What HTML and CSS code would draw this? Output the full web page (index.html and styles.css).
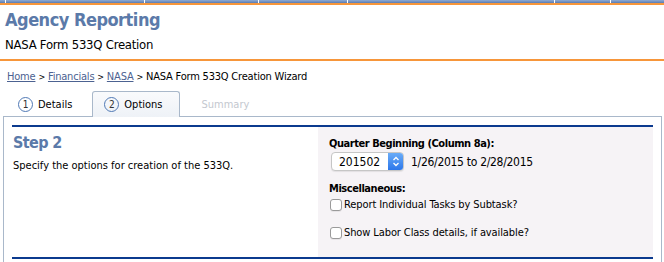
FILE: index.html
```html
<!DOCTYPE html>
<html lang="en">
<head>
    <meta charset="UTF-8">
    <title>Agency Reporting</title>
    <link rel="stylesheet" href="styles.css">
</head>
<body>
<div class="topnav">
    <span class="nav-item nav-start"></span>
    <span class="nav-item nav-projects"></span>
    <span class="nav-item nav-financials"></span>
    <span class="nav-item nav-people"></span>
    <span class="nav-item nav-reports"></span>
    <span class="nav-item nav-admin"></span>
    <span class="nav-item nav-rest"></span>
</div>

<header class="masthead">
    <h1>Agency Reporting</h1>
    <div class="subtitle">NASA Form 533Q Creation</div>
</header>

<div class="crumbs">
    <a href="#">Home</a> <span class="sep">&gt;</span>
    <a href="#">Financials</a> <span class="sep">&gt;</span>
    <a href="#">NASA</a> <span class="sep">&gt;</span>
    NASA Form 533Q Creation Wizard
</div>

<ul class="tabs">
    <li class="tab"><span class="num">1</span>Details</li>
    <li class="tab active"><span class="num">2</span>Options</li>
    <li class="tab disabled">Summary</li>
</ul>

<div class="panel">
    <div class="step">
        <div class="step-intro">
            <h2>Step 2</h2>
            <p>Specify the options for creation of the 533Q.</p>
        </div>
        <div class="step-options">
            <label class="field-label" for="quarter">Quarter Beginning (Column 8a):</label>
            <div class="quarter-row">
                <div class="select-box">
                    <select id="quarter">
                        <option>201502</option>
                    </select>
                    <span class="stepper">
                        <svg width="8" height="11" viewBox="0 0 8 11">
                            <path d="M1.5 4 L4 1.5 L6.5 4 M1.5 7 L4 9.5 L6.5 7" fill="none" stroke="#fff" stroke-width="1.3"/>
                        </svg>
                    </span>
                </div>
                <span class="range">1/26/2015 to 2/28/2015</span>
            </div>

            <div class="field-label misc">Miscellaneous:</div>
            <label class="check"><input type="checkbox">Report Individual Tasks by Subtask?</label>
            <label class="check"><input type="checkbox">Show Labor Class details, if available?</label>
        </div>
    </div>
</div>
</body>
</html>
```

FILE: styles.css
```css
body {
    margin: 0;
    font-family: "DejaVu Sans Condensed", "DejaVu Sans", sans-serif;
    font-stretch: condensed;
    font-size: 11px;
    color: #000;
    background: #fff;
}

/* nav bar, only its lower edge shows */
.topnav {
    display: flex;
    height: 3px;
    background: linear-gradient(#90abd3, #5b7db2);
    border-bottom: 2px solid #f7963a;
}

.nav-item {
    border-right: 1px solid #fff;
    height: 3px;
}

.nav-start { width: 5px; }
.nav-projects { width: 138px; }
.nav-financials { width: 113px; }
.nav-people { width: 88px; }
.nav-reports { width: 206px; }
.nav-admin { width: 55px; }
.nav-rest { flex: 1; border-right: none; }

.masthead {
    padding: 3px 5px 6px;
    border-bottom: 2px solid #f7963a;
}

.masthead h1 {
    margin: 0;
    font-size: 18px;
    line-height: 24px;
    letter-spacing: -0.5px;
    color: #5b7aa9;
}

.subtitle {
    margin-top: 5px;
    font-size: 13px;
    line-height: 16px;
    letter-spacing: -0.25px;
}

.crumbs {
    margin: 9px 7px 0;
    line-height: 14px;
    letter-spacing: -0.2px;
}

.crumbs a {
    color: #4c6291;
}

.crumbs .sep {
    font-size: 9px;
}

.tabs {
    display: flex;
    list-style: none;
    margin: 7px 0 0 14px;
    padding: 0;
    position: relative;
    z-index: 1;
}

.tab {
    display: flex;
    align-items: center;
    gap: 5px;
    padding: 5px 12px 4px 3px;
    line-height: 15px;
    border: 1px solid transparent;
    border-bottom: none;
    border-radius: 3px 3px 0 0;
}

.tab.active {
    margin-left: 7px;
    padding-left: 11px;
    padding-right: 16px;
    border-color: #a9b8ca;
    background: linear-gradient(#f9fafc, #eef2f7);
    margin-bottom: -1px;
    padding-bottom: 5px;
}

.tab.disabled {
    color: #c4c8cf;
    padding-left: 21px;
}

.num {
    width: 13px;
    height: 13px;
    border: 1px solid #5079b5;
    border-radius: 50%;
    display: flex;
    align-items: center;
    justify-content: center;
    font-size: 10px;
    color: #333;
}

.panel {
    margin: 0 2px 0 3px;
    padding: 8px 8px 0;
    border: 1px solid #a9b8ca;
    min-height: 160px;
}

.step {
    display: flex;
    border-top: 2px solid #0b3a8e;
    border-bottom: 2px solid #0b3a8e;
}

.step-intro {
    width: 305px;
    padding: 6px 0 0 1px;
}

.step-intro h2 {
    margin: 0;
    font-size: 16px;
    line-height: 20px;
    letter-spacing: -0.6px;
    color: #5b7aa9;
}

.step-intro p {
    margin: 6px 0 0;
    line-height: 14px;
}

.step-options {
    flex: 1;
    background: #f6f3f6;
    padding: 10px 0 17px 11px;
}

.field-label {
    display: block;
    font-weight: bold;
    line-height: 14px;
    letter-spacing: -0.45px;
}

.field-label.misc {
    margin-top: 11px;
}

.quarter-row {
    display: flex;
    align-items: center;
    gap: 7px;
    margin: 1px 0 0 2px;
}

.select-box {
    display: flex;
    width: 71px;
    height: 17px;
    border: 1px solid #c6c6c6;
    border-radius: 4px;
    background: #fff;
    box-shadow: 0 1px 1px rgba(0, 0, 0, 0.08);
    overflow: hidden;
}

.select-box select {
    flex: 1;
    appearance: none;
    border: none;
    background: transparent;
    font: inherit;
    font-size: 12px;
    padding: 0 0 0 7px;
    margin: 0;
    outline: none;
}

.stepper {
    width: 15px;
    display: flex;
    align-items: center;
    justify-content: center;
    background: linear-gradient(#6aacf8, #2d77ea);
}

.range {
    font-size: 12px;
    letter-spacing: -0.3px;
}

.check {
    display: flex;
    align-items: center;
    gap: 2px;
    line-height: 14px;
    margin-top: 2px;
    letter-spacing: -0.1px;
}

.check + .check {
    margin-top: 14px;
}

.check input {
    appearance: none;
    width: 12px;
    height: 12px;
    margin: 0 0 0 1px;
    border: 1px solid #9a9a9a;
    border-radius: 3px;
    background: #fff;
    box-shadow: 0 1px 0 rgba(0, 0, 0, 0.06);
}
```
